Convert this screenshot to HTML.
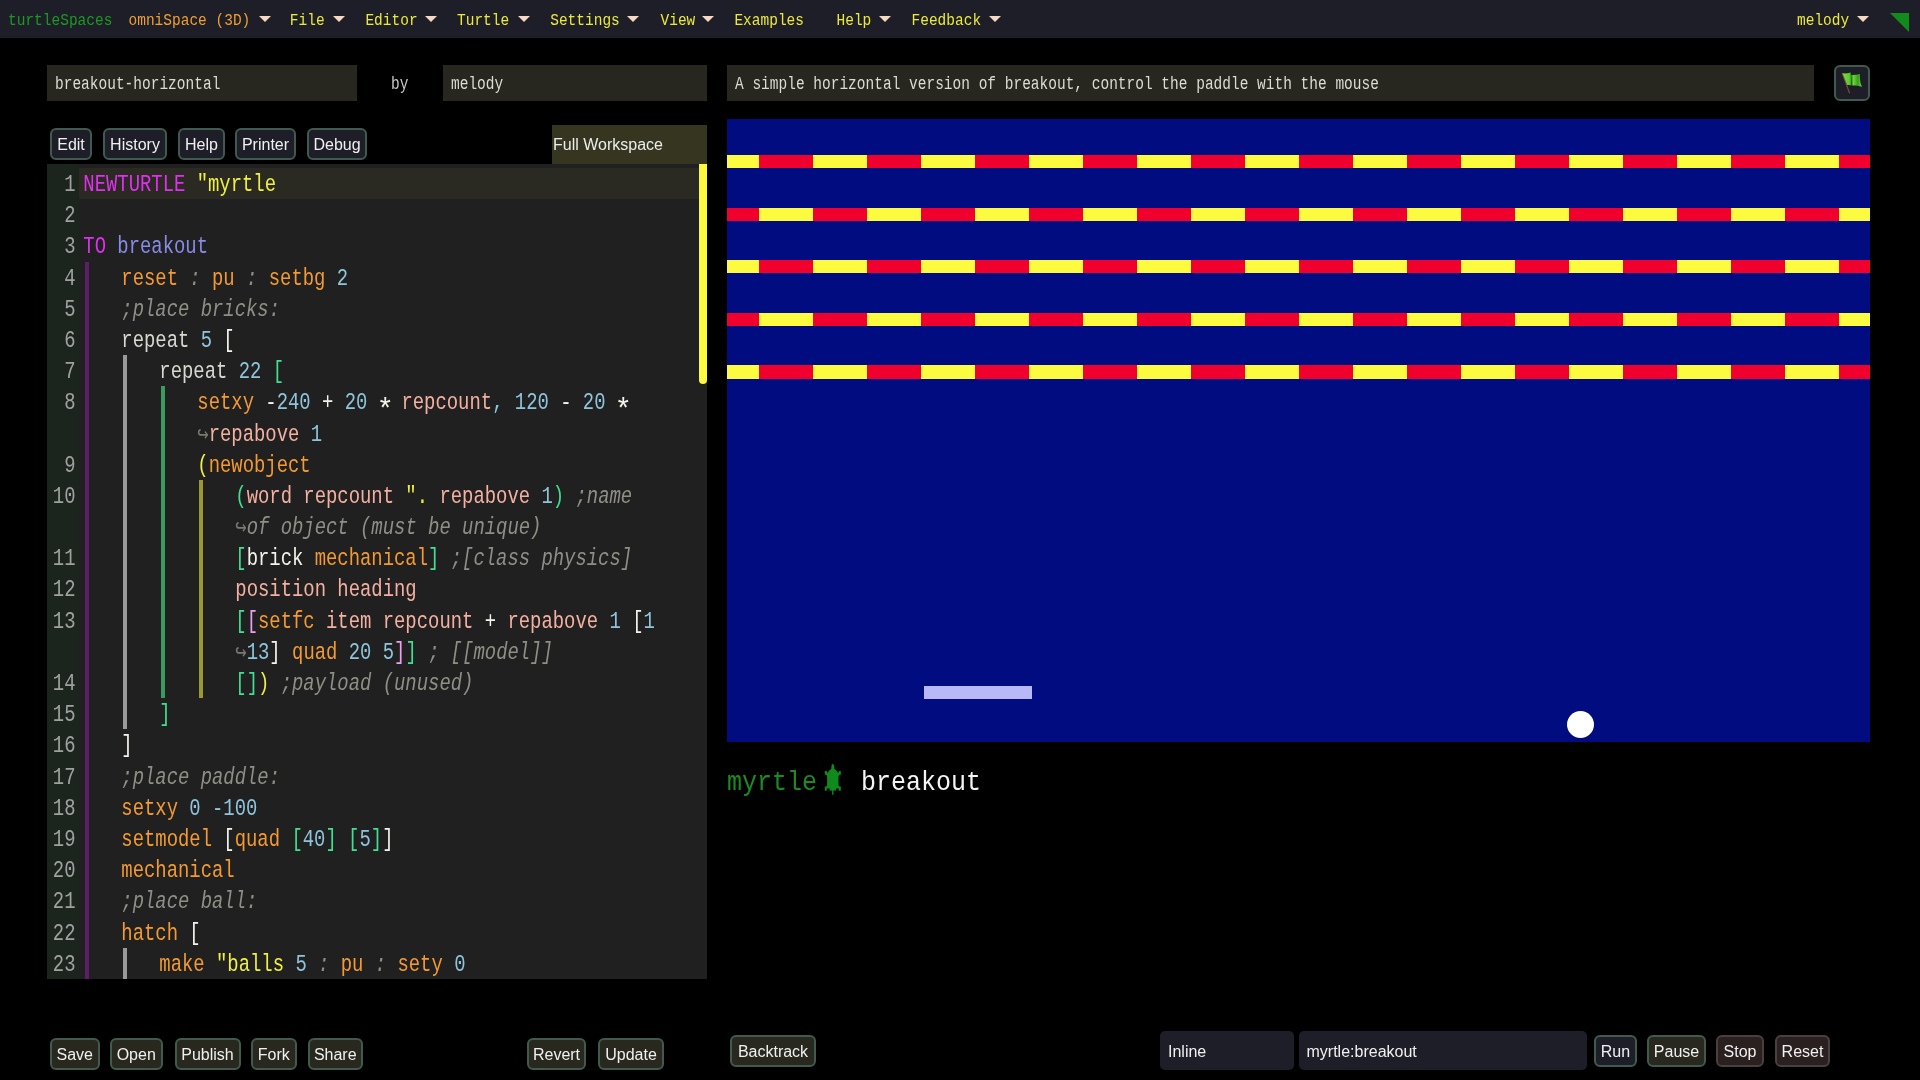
<!DOCTYPE html>
<html><head><meta charset="utf-8"><style>
html,body{margin:0;padding:0;background:#000;width:1920px;height:1080px;overflow:hidden;position:relative}
*{box-sizing:border-box}
.mono{font-family:"Liberation Mono",monospace}
.sans{font-family:"Liberation Sans",sans-serif}
#menubar{position:absolute;left:0;top:0;width:1920px;height:38px;background:#1e1e28}
.mi{position:absolute;top:1.5px;height:38px;line-height:38px;font-family:"Liberation Mono",monospace;font-size:14.5px;white-space:pre;transform:scaleY(1.19);transform-origin:0 25px}
.arr{position:absolute;top:16px;width:0;height:0;border-left:6px solid transparent;border-right:6px solid transparent;border-top:6.5px solid #f8d8c0}
.inp{position:absolute;background:#27261f;color:#dcdcd4;font-family:"Liberation Mono",monospace;font-size:14.5px;white-space:pre}
.inp span{position:absolute;left:8px;top:2.3px;line-height:36px;transform:scaleY(1.22);transform-origin:0 24px}
.btn{position:absolute;padding-top:2px;border:2px solid #405a50;border-radius:6px;color:#f0f0f0;font-family:"Liberation Sans",sans-serif;font-size:16px;text-align:center;display:flex;align-items:center;justify-content:center;white-space:pre}
#editor{position:absolute;left:47px;top:164px;width:660px;height:815px;background:#202020;overflow:hidden}
#gutter{position:absolute;left:47px;top:164px;width:32px;height:815px;background:#1c241e}
.ln{position:absolute;height:31.19px;line-height:31.19px;padding-top:3px;transform:scaleY(1.23);transform-origin:0 23px;font-family:"Liberation Mono",monospace;font-size:18.9px;white-space:pre;color:#e6e6dc}
.lnum{position:absolute;left:40px;width:35.5px;text-align:right;height:31.19px;line-height:31.19px;padding-top:3px;transform:scaleY(1.23);transform-origin:0 23px;font-family:"Liberation Mono",monospace;font-size:18.9px;color:#a0a0a0;white-space:pre}
#canvas{position:absolute;left:727px;top:119px;width:1143px;height:623px;background:#000c80;overflow:hidden}
</style></head><body><div id="root" style="position:absolute;left:0;top:0;width:1920px;height:1080px;background:#000;will-change:transform;overflow:hidden">
<div id="menubar"><div class="mi" style="left:8.0px;color:#1b9a22">turtleSpaces</div><div class="mi" style="left:128.5px;color:#f0a030">omniSpace (3D)</div><div class="arr" style="left:258.7px"></div><div class="mi" style="left:289.8px;color:#eaea38">File</div><div class="arr" style="left:333.0px"></div><div class="mi" style="left:365.4px;color:#eaea38">Editor</div><div class="arr" style="left:425.2px"></div><div class="mi" style="left:457.0px;color:#eaea38">Turtle</div><div class="arr" style="left:517.5px"></div><div class="mi" style="left:550.2px;color:#eaea38">Settings</div><div class="arr" style="left:627.3px"></div><div class="mi" style="left:660.5px;color:#eaea38">View</div><div class="arr" style="left:701.8px"></div><div class="mi" style="left:734.4px;color:#eaea38">Examples</div><div class="mi" style="left:836.5px;color:#eaea38">Help</div><div class="arr" style="left:879.2px"></div><div class="mi" style="left:911.5px;color:#eaea38">Feedback</div><div class="arr" style="left:988.9px"></div><div class="mi" style="left:1797.0px;color:#eaea38">melody</div><div class="arr" style="left:1857.2px"></div><svg style="position:absolute;left:1890px;top:12.5px" width="20" height="20" viewBox="0 0 20 20"><polygon points="0,0 19,0 19,19" fill="#138a1c"/></svg></div>
<div class="inp" style="left:47px;top:65px;width:310px;height:36px"><span>breakout-horizontal</span></div>
<div class="mono" style="position:absolute;left:391px;top:66.5px;height:36px;line-height:36px;font-size:14.5px;color:#c8c8c8;transform:scaleY(1.22);transform-origin:0 24px">by</div>
<div class="inp" style="left:443px;top:65px;width:264px;height:36px"><span>melody</span></div>
<div class="inp" style="left:727px;top:65px;width:1087px;height:36px"><span>A simple horizontal version of breakout, control the paddle with the mouse</span></div>
<div style="position:absolute;left:1834px;top:65px;width:36px;height:36px;background:#1e1e28;border:2px solid #405a50;border-radius:6px"></div>
<svg style="position:absolute;left:1834px;top:65px" width="36" height="36" viewBox="1834 65 36 36"><defs><linearGradient id="fg" x1="0" x2="1" y1="0" y2="0"><stop offset="0" stop-color="#78e040"/><stop offset="0.35" stop-color="#5cc830"/><stop offset="0.48" stop-color="#2e8a18"/><stop offset="0.55" stop-color="#6ad838"/><stop offset="0.8" stop-color="#3a9a20"/><stop offset="1" stop-color="#78e040"/></linearGradient></defs>
<line x1="1842.2" y1="73" x2="1849.6" y2="93.3" stroke="#7a5234" stroke-width="1.1"/>
<path d="M1842.6,73.3 C1845,73.6 1848,73.4 1850.6,72.4 L1851.6,85.4 C1850,85.2 1848.5,85.1 1847.2,85.1 Z M1850.9,74.9 C1854,75 1857,74.8 1859.8,74.1 C1859.8,78 1860,83 1861.9,86.8 C1858.5,85.8 1855,85.5 1852.2,85.6 Z" fill="url(#fg)"/></svg>
<div class="btn" style="left:50.0px;top:128.0px;width:42.0px;height:32.0px;background:#1e1e28;border-color:#405a50;font-size:16px">Edit</div><div class="btn" style="left:103.0px;top:128.0px;width:64.0px;height:32.0px;background:#1e1e28;border-color:#405a50;font-size:16px">History</div><div class="btn" style="left:178.0px;top:128.0px;width:47.0px;height:32.0px;background:#1e1e28;border-color:#405a50;font-size:16px">Help</div><div class="btn" style="left:235.0px;top:128.0px;width:61.0px;height:32.0px;background:#1e1e28;border-color:#405a50;font-size:16px">Printer</div><div class="btn" style="left:307.0px;top:128.0px;width:60.0px;height:32.0px;background:#1e1e28;border-color:#405a50;font-size:16px">Debug</div><div class="btn" style="left:50.0px;top:1038.0px;width:49.5px;height:31.5px;background:#28281f;border-color:#405a50;font-size:16px">Save</div><div class="btn" style="left:110.0px;top:1038.0px;width:52.5px;height:31.5px;background:#28281f;border-color:#405a50;font-size:16px">Open</div><div class="btn" style="left:174.5px;top:1038.0px;width:66.0px;height:31.5px;background:#28281f;border-color:#405a50;font-size:16px">Publish</div><div class="btn" style="left:251.0px;top:1038.0px;width:45.5px;height:31.5px;background:#28281f;border-color:#405a50;font-size:16px">Fork</div><div class="btn" style="left:308.0px;top:1038.0px;width:54.5px;height:31.5px;background:#28281f;border-color:#405a50;font-size:16px">Share</div><div class="btn" style="left:527.0px;top:1038.0px;width:59.0px;height:31.5px;background:#28281f;border-color:#405a50;font-size:16px">Revert</div><div class="btn" style="left:598.0px;top:1038.0px;width:66.0px;height:31.5px;background:#28281f;border-color:#405a50;font-size:16px">Update</div><div class="btn" style="left:730.0px;top:1035.0px;width:86.0px;height:32.0px;background:#28281f;border-color:#405a50;font-size:16px">Backtrack</div><div class="btn" style="left:1594.0px;top:1035.0px;width:43.0px;height:31.5px;background:#1e1e28;border-color:#405a50;font-size:16px">Run</div><div class="btn" style="left:1647.0px;top:1035.0px;width:59.0px;height:31.5px;background:#28281f;border-color:#405a50;font-size:16px">Pause</div><div class="btn" style="left:1716.0px;top:1035.0px;width:48.0px;height:31.5px;background:#2a2020;border-color:#4a4040;font-size:16px">Stop</div><div class="btn" style="left:1775.0px;top:1035.0px;width:55.0px;height:31.5px;background:#2a2020;border-color:#4a4040;font-size:16px">Reset</div>
<div style="position:absolute;left:552px;top:125px;width:155px;height:39px;background:#36351f"></div>
<div class="sans" style="position:absolute;left:553px;top:125px;height:39px;line-height:39px;font-size:16px;color:#ececec">Full Workspace</div>
<div id="editor"></div>
<div id="gutter"></div>
<div style="position:absolute;left:79px;top:168px;width:620px;height:31px;background:#2a2a22"></div>
<div style="position:absolute;left:699px;top:164px;width:8px;height:220px;background:#fdf93c;border-radius:0 0 4px 4px"></div>
<div style="position:absolute;left:85px;top:261.57px;width:4px;height:717.37px;background:#5c1e66"></div><div style="position:absolute;left:123px;top:355.14px;width:4px;height:374.28px;background:#9a9a9a"></div><div style="position:absolute;left:123px;top:947.75px;width:4px;height:31.19px;background:#9a9a9a"></div><div style="position:absolute;left:161px;top:386.33px;width:4px;height:311.90px;background:#3c9a60"></div><div style="position:absolute;left:199px;top:479.90px;width:4px;height:218.33px;background:#9a9a30"></div>
<div class="ln" style="top:168.00px;left:83.30px"><span style="color:#e030f0">NEWTURTLE</span><span style="color:#d8d8d0"> </span><span style="color:#f0f040">&quot;myrtle</span></div><div class="lnum" style="top:168.00px">1</div><div class="ln" style="top:199.19px;left:83.30px"></div><div class="lnum" style="top:199.19px">2</div><div class="ln" style="top:230.38px;left:83.30px"><span style="color:#e030f0">TO</span><span style="color:#d8d8d0"> </span><span style="color:#8a8ae8">breakout</span></div><div class="lnum" style="top:230.38px">3</div><div class="ln" style="top:261.57px;left:121.30px"><span style="color:#f39a32">reset</span><span style="color:#8f8f86;font-style:italic"> : </span><span style="color:#f39a32">pu</span><span style="color:#8f8f86;font-style:italic"> : </span><span style="color:#f39a32">setbg</span><span style="color:#d8d8d0"> </span><span style="color:#8ec4dc">2</span></div><div class="lnum" style="top:261.57px">4</div><div class="ln" style="top:292.76px;left:121.30px"><span style="color:#8f8f86;font-style:italic">;place bricks:</span></div><div class="lnum" style="top:292.76px">5</div><div class="ln" style="top:323.95px;left:121.30px"><span style="color:#d8d8d0">repeat </span><span style="color:#8ec4dc">5</span><span style="color:#d8d8d0"> </span><span style="color:#f4f4ec">[</span></div><div class="lnum" style="top:323.95px">6</div><div class="ln" style="top:355.14px;left:159.30px"><span style="color:#d8d8d0">repeat </span><span style="color:#8ec4dc">22</span><span style="color:#d8d8d0"> </span><span style="color:#40e090">[</span></div><div class="lnum" style="top:355.14px">7</div><div class="ln" style="top:386.33px;left:197.30px"><span style="color:#f39a32">setxy</span><span style="color:#d8d8d0"> </span><span style="color:#f4f4ec">-</span><span style="color:#8ec4dc">240</span><span style="color:#f4f4ec"> + </span><span style="color:#8ec4dc">20</span><span style="color:#f4f4ec"> </span><span style="color:#f4f4ec;display:inline-block;transform:translate(0.5px,6.5px) scale(1.5,1.3);transform-origin:50% 45%">*</span><span style="color:#f4f4ec"> </span><span style="color:#f4b0a0">repcount</span><span style="color:#8ec4dc">, </span><span style="color:#8ec4dc">120</span><span style="color:#f4f4ec"> - </span><span style="color:#8ec4dc">20</span><span style="color:#f4f4ec"> </span><span style="color:#f4f4ec;display:inline-block;transform:translate(0.5px,6.5px) scale(1.5,1.3);transform-origin:50% 45%">*</span></div><div class="lnum" style="top:386.33px">8</div><div class="ln" style="top:417.52px;left:197.30px"><span style="color:#7a7a72">↪</span><span style="color:#f4b0a0">repabove</span><span style="color:#d8d8d0"> </span><span style="color:#8ec4dc">1</span></div><div class="ln" style="top:448.71px;left:197.30px"><span style="color:#f0f040">(</span><span style="color:#f39a32">newobject</span></div><div class="lnum" style="top:448.71px">9</div><div class="ln" style="top:479.90px;left:235.30px"><span style="color:#40e090">(</span><span style="color:#f4b0a0">word repcount </span><span style="color:#f0f040">&quot;.</span><span style="color:#d8d8d0"> </span><span style="color:#f4b0a0">repabove</span><span style="color:#d8d8d0"> </span><span style="color:#8ec4dc">1</span><span style="color:#40e090">)</span><span style="color:#d8d8d0"> </span><span style="color:#8f8f86;font-style:italic">;name</span></div><div class="lnum" style="top:479.90px">10</div><div class="ln" style="top:511.09px;left:235.30px"><span style="color:#7a7a72">↪</span><span style="color:#8f8f86;font-style:italic">of object (must be unique)</span></div><div class="ln" style="top:542.28px;left:235.30px"><span style="color:#40e090">[</span><span style="color:#f4f4ec">brick</span><span style="color:#d8d8d0"> </span><span style="color:#f39a32">mechanical</span><span style="color:#40e090">]</span><span style="color:#d8d8d0"> </span><span style="color:#8f8f86;font-style:italic">;[class physics]</span></div><div class="lnum" style="top:542.28px">11</div><div class="ln" style="top:573.47px;left:235.30px"><span style="color:#f4b0a0">position heading</span></div><div class="lnum" style="top:573.47px">12</div><div class="ln" style="top:604.66px;left:235.30px"><span style="color:#40e090">[</span><span style="color:#e8a0f0">[</span><span style="color:#f39a32">setfc</span><span style="color:#d8d8d0"> </span><span style="color:#f4b0a0">item repcount</span><span style="color:#f4f4ec"> + </span><span style="color:#f4b0a0">repabove</span><span style="color:#d8d8d0"> </span><span style="color:#8ec4dc">1</span><span style="color:#d8d8d0"> </span><span style="color:#f4f4ec">[</span><span style="color:#8ec4dc">1</span></div><div class="lnum" style="top:604.66px">13</div><div class="ln" style="top:635.85px;left:235.30px"><span style="color:#7a7a72">↪</span><span style="color:#8ec4dc">13</span><span style="color:#f4f4ec">]</span><span style="color:#d8d8d0"> </span><span style="color:#f39a32">quad</span><span style="color:#d8d8d0"> </span><span style="color:#8ec4dc">20 5</span><span style="color:#e8a0f0">]</span><span style="color:#40e090">]</span><span style="color:#d8d8d0"> </span><span style="color:#8f8f86;font-style:italic">; [[model]]</span></div><div class="ln" style="top:667.04px;left:235.30px"><span style="color:#40e090">[]</span><span style="color:#f0f040">)</span><span style="color:#d8d8d0"> </span><span style="color:#8f8f86;font-style:italic">;payload (unused)</span></div><div class="lnum" style="top:667.04px">14</div><div class="ln" style="top:698.23px;left:159.30px"><span style="color:#40e090">]</span></div><div class="lnum" style="top:698.23px">15</div><div class="ln" style="top:729.42px;left:121.30px"><span style="color:#f4f4ec">]</span></div><div class="lnum" style="top:729.42px">16</div><div class="ln" style="top:760.61px;left:121.30px"><span style="color:#8f8f86;font-style:italic">;place paddle:</span></div><div class="lnum" style="top:760.61px">17</div><div class="ln" style="top:791.80px;left:121.30px"><span style="color:#f39a32">setxy</span><span style="color:#d8d8d0"> </span><span style="color:#8ec4dc">0 -100</span></div><div class="lnum" style="top:791.80px">18</div><div class="ln" style="top:822.99px;left:121.30px"><span style="color:#f39a32">setmodel</span><span style="color:#d8d8d0"> </span><span style="color:#f4f4ec">[</span><span style="color:#f39a32">quad</span><span style="color:#d8d8d0"> </span><span style="color:#40e090">[</span><span style="color:#8ec4dc">40</span><span style="color:#40e090">]</span><span style="color:#d8d8d0"> </span><span style="color:#40e090">[</span><span style="color:#8ec4dc">5</span><span style="color:#40e090">]</span><span style="color:#f4f4ec">]</span></div><div class="lnum" style="top:822.99px">19</div><div class="ln" style="top:854.18px;left:121.30px"><span style="color:#f39a32">mechanical</span></div><div class="lnum" style="top:854.18px">20</div><div class="ln" style="top:885.37px;left:121.30px"><span style="color:#8f8f86;font-style:italic">;place ball:</span></div><div class="lnum" style="top:885.37px">21</div><div class="ln" style="top:916.56px;left:121.30px"><span style="color:#f39a32">hatch</span><span style="color:#d8d8d0"> </span><span style="color:#f4f4ec">[</span></div><div class="lnum" style="top:916.56px">22</div><div class="ln" style="top:947.75px;left:159.30px"><span style="color:#f39a32">make</span><span style="color:#d8d8d0"> </span><span style="color:#f0f040">&quot;balls</span><span style="color:#d8d8d0"> </span><span style="color:#8ec4dc">5</span><span style="color:#8f8f86;font-style:italic"> : </span><span style="color:#f39a32">pu</span><span style="color:#8f8f86;font-style:italic"> : </span><span style="color:#f39a32">sety</span><span style="color:#d8d8d0"> </span><span style="color:#8ec4dc">0</span></div><div class="lnum" style="top:947.75px">23</div>
<div id="canvas"><div style="position:absolute;left:0.00px;top:36.10px;width:31.70px;height:13.3px;background:#fdfb40"></div><div style="position:absolute;left:31.70px;top:36.10px;width:54.00px;height:13.3px;background:#f0002c"></div><div style="position:absolute;left:85.70px;top:36.10px;width:54.00px;height:13.3px;background:#fdfb40"></div><div style="position:absolute;left:139.70px;top:36.10px;width:54.00px;height:13.3px;background:#f0002c"></div><div style="position:absolute;left:193.70px;top:36.10px;width:54.00px;height:13.3px;background:#fdfb40"></div><div style="position:absolute;left:247.70px;top:36.10px;width:54.00px;height:13.3px;background:#f0002c"></div><div style="position:absolute;left:301.70px;top:36.10px;width:54.00px;height:13.3px;background:#fdfb40"></div><div style="position:absolute;left:355.70px;top:36.10px;width:54.00px;height:13.3px;background:#f0002c"></div><div style="position:absolute;left:409.70px;top:36.10px;width:54.00px;height:13.3px;background:#fdfb40"></div><div style="position:absolute;left:463.70px;top:36.10px;width:54.00px;height:13.3px;background:#f0002c"></div><div style="position:absolute;left:517.70px;top:36.10px;width:54.00px;height:13.3px;background:#fdfb40"></div><div style="position:absolute;left:571.70px;top:36.10px;width:54.00px;height:13.3px;background:#f0002c"></div><div style="position:absolute;left:625.70px;top:36.10px;width:54.00px;height:13.3px;background:#fdfb40"></div><div style="position:absolute;left:679.70px;top:36.10px;width:54.00px;height:13.3px;background:#f0002c"></div><div style="position:absolute;left:733.70px;top:36.10px;width:54.00px;height:13.3px;background:#fdfb40"></div><div style="position:absolute;left:787.70px;top:36.10px;width:54.00px;height:13.3px;background:#f0002c"></div><div style="position:absolute;left:841.70px;top:36.10px;width:54.00px;height:13.3px;background:#fdfb40"></div><div style="position:absolute;left:895.70px;top:36.10px;width:54.00px;height:13.3px;background:#f0002c"></div><div style="position:absolute;left:949.70px;top:36.10px;width:54.00px;height:13.3px;background:#fdfb40"></div><div style="position:absolute;left:1003.70px;top:36.10px;width:54.00px;height:13.3px;background:#f0002c"></div><div style="position:absolute;left:1057.70px;top:36.10px;width:54.00px;height:13.3px;background:#fdfb40"></div><div style="position:absolute;left:1111.70px;top:36.10px;width:31.30px;height:13.3px;background:#f0002c"></div><div style="position:absolute;left:0.00px;top:88.70px;width:31.70px;height:13.3px;background:#f0002c"></div><div style="position:absolute;left:31.70px;top:88.70px;width:54.00px;height:13.3px;background:#fdfb40"></div><div style="position:absolute;left:85.70px;top:88.70px;width:54.00px;height:13.3px;background:#f0002c"></div><div style="position:absolute;left:139.70px;top:88.70px;width:54.00px;height:13.3px;background:#fdfb40"></div><div style="position:absolute;left:193.70px;top:88.70px;width:54.00px;height:13.3px;background:#f0002c"></div><div style="position:absolute;left:247.70px;top:88.70px;width:54.00px;height:13.3px;background:#fdfb40"></div><div style="position:absolute;left:301.70px;top:88.70px;width:54.00px;height:13.3px;background:#f0002c"></div><div style="position:absolute;left:355.70px;top:88.70px;width:54.00px;height:13.3px;background:#fdfb40"></div><div style="position:absolute;left:409.70px;top:88.70px;width:54.00px;height:13.3px;background:#f0002c"></div><div style="position:absolute;left:463.70px;top:88.70px;width:54.00px;height:13.3px;background:#fdfb40"></div><div style="position:absolute;left:517.70px;top:88.70px;width:54.00px;height:13.3px;background:#f0002c"></div><div style="position:absolute;left:571.70px;top:88.70px;width:54.00px;height:13.3px;background:#fdfb40"></div><div style="position:absolute;left:625.70px;top:88.70px;width:54.00px;height:13.3px;background:#f0002c"></div><div style="position:absolute;left:679.70px;top:88.70px;width:54.00px;height:13.3px;background:#fdfb40"></div><div style="position:absolute;left:733.70px;top:88.70px;width:54.00px;height:13.3px;background:#f0002c"></div><div style="position:absolute;left:787.70px;top:88.70px;width:54.00px;height:13.3px;background:#fdfb40"></div><div style="position:absolute;left:841.70px;top:88.70px;width:54.00px;height:13.3px;background:#f0002c"></div><div style="position:absolute;left:895.70px;top:88.70px;width:54.00px;height:13.3px;background:#fdfb40"></div><div style="position:absolute;left:949.70px;top:88.70px;width:54.00px;height:13.3px;background:#f0002c"></div><div style="position:absolute;left:1003.70px;top:88.70px;width:54.00px;height:13.3px;background:#fdfb40"></div><div style="position:absolute;left:1057.70px;top:88.70px;width:54.00px;height:13.3px;background:#f0002c"></div><div style="position:absolute;left:1111.70px;top:88.70px;width:31.30px;height:13.3px;background:#fdfb40"></div><div style="position:absolute;left:0.00px;top:141.20px;width:31.70px;height:13.3px;background:#fdfb40"></div><div style="position:absolute;left:31.70px;top:141.20px;width:54.00px;height:13.3px;background:#f0002c"></div><div style="position:absolute;left:85.70px;top:141.20px;width:54.00px;height:13.3px;background:#fdfb40"></div><div style="position:absolute;left:139.70px;top:141.20px;width:54.00px;height:13.3px;background:#f0002c"></div><div style="position:absolute;left:193.70px;top:141.20px;width:54.00px;height:13.3px;background:#fdfb40"></div><div style="position:absolute;left:247.70px;top:141.20px;width:54.00px;height:13.3px;background:#f0002c"></div><div style="position:absolute;left:301.70px;top:141.20px;width:54.00px;height:13.3px;background:#fdfb40"></div><div style="position:absolute;left:355.70px;top:141.20px;width:54.00px;height:13.3px;background:#f0002c"></div><div style="position:absolute;left:409.70px;top:141.20px;width:54.00px;height:13.3px;background:#fdfb40"></div><div style="position:absolute;left:463.70px;top:141.20px;width:54.00px;height:13.3px;background:#f0002c"></div><div style="position:absolute;left:517.70px;top:141.20px;width:54.00px;height:13.3px;background:#fdfb40"></div><div style="position:absolute;left:571.70px;top:141.20px;width:54.00px;height:13.3px;background:#f0002c"></div><div style="position:absolute;left:625.70px;top:141.20px;width:54.00px;height:13.3px;background:#fdfb40"></div><div style="position:absolute;left:679.70px;top:141.20px;width:54.00px;height:13.3px;background:#f0002c"></div><div style="position:absolute;left:733.70px;top:141.20px;width:54.00px;height:13.3px;background:#fdfb40"></div><div style="position:absolute;left:787.70px;top:141.20px;width:54.00px;height:13.3px;background:#f0002c"></div><div style="position:absolute;left:841.70px;top:141.20px;width:54.00px;height:13.3px;background:#fdfb40"></div><div style="position:absolute;left:895.70px;top:141.20px;width:54.00px;height:13.3px;background:#f0002c"></div><div style="position:absolute;left:949.70px;top:141.20px;width:54.00px;height:13.3px;background:#fdfb40"></div><div style="position:absolute;left:1003.70px;top:141.20px;width:54.00px;height:13.3px;background:#f0002c"></div><div style="position:absolute;left:1057.70px;top:141.20px;width:54.00px;height:13.3px;background:#fdfb40"></div><div style="position:absolute;left:1111.70px;top:141.20px;width:31.30px;height:13.3px;background:#f0002c"></div><div style="position:absolute;left:0.00px;top:193.80px;width:31.70px;height:13.3px;background:#f0002c"></div><div style="position:absolute;left:31.70px;top:193.80px;width:54.00px;height:13.3px;background:#fdfb40"></div><div style="position:absolute;left:85.70px;top:193.80px;width:54.00px;height:13.3px;background:#f0002c"></div><div style="position:absolute;left:139.70px;top:193.80px;width:54.00px;height:13.3px;background:#fdfb40"></div><div style="position:absolute;left:193.70px;top:193.80px;width:54.00px;height:13.3px;background:#f0002c"></div><div style="position:absolute;left:247.70px;top:193.80px;width:54.00px;height:13.3px;background:#fdfb40"></div><div style="position:absolute;left:301.70px;top:193.80px;width:54.00px;height:13.3px;background:#f0002c"></div><div style="position:absolute;left:355.70px;top:193.80px;width:54.00px;height:13.3px;background:#fdfb40"></div><div style="position:absolute;left:409.70px;top:193.80px;width:54.00px;height:13.3px;background:#f0002c"></div><div style="position:absolute;left:463.70px;top:193.80px;width:54.00px;height:13.3px;background:#fdfb40"></div><div style="position:absolute;left:517.70px;top:193.80px;width:54.00px;height:13.3px;background:#f0002c"></div><div style="position:absolute;left:571.70px;top:193.80px;width:54.00px;height:13.3px;background:#fdfb40"></div><div style="position:absolute;left:625.70px;top:193.80px;width:54.00px;height:13.3px;background:#f0002c"></div><div style="position:absolute;left:679.70px;top:193.80px;width:54.00px;height:13.3px;background:#fdfb40"></div><div style="position:absolute;left:733.70px;top:193.80px;width:54.00px;height:13.3px;background:#f0002c"></div><div style="position:absolute;left:787.70px;top:193.80px;width:54.00px;height:13.3px;background:#fdfb40"></div><div style="position:absolute;left:841.70px;top:193.80px;width:54.00px;height:13.3px;background:#f0002c"></div><div style="position:absolute;left:895.70px;top:193.80px;width:54.00px;height:13.3px;background:#fdfb40"></div><div style="position:absolute;left:949.70px;top:193.80px;width:54.00px;height:13.3px;background:#f0002c"></div><div style="position:absolute;left:1003.70px;top:193.80px;width:54.00px;height:13.3px;background:#fdfb40"></div><div style="position:absolute;left:1057.70px;top:193.80px;width:54.00px;height:13.3px;background:#f0002c"></div><div style="position:absolute;left:1111.70px;top:193.80px;width:31.30px;height:13.3px;background:#fdfb40"></div><div style="position:absolute;left:0.00px;top:246.30px;width:31.70px;height:13.3px;background:#fdfb40"></div><div style="position:absolute;left:31.70px;top:246.30px;width:54.00px;height:13.3px;background:#f0002c"></div><div style="position:absolute;left:85.70px;top:246.30px;width:54.00px;height:13.3px;background:#fdfb40"></div><div style="position:absolute;left:139.70px;top:246.30px;width:54.00px;height:13.3px;background:#f0002c"></div><div style="position:absolute;left:193.70px;top:246.30px;width:54.00px;height:13.3px;background:#fdfb40"></div><div style="position:absolute;left:247.70px;top:246.30px;width:54.00px;height:13.3px;background:#f0002c"></div><div style="position:absolute;left:301.70px;top:246.30px;width:54.00px;height:13.3px;background:#fdfb40"></div><div style="position:absolute;left:355.70px;top:246.30px;width:54.00px;height:13.3px;background:#f0002c"></div><div style="position:absolute;left:409.70px;top:246.30px;width:54.00px;height:13.3px;background:#fdfb40"></div><div style="position:absolute;left:463.70px;top:246.30px;width:54.00px;height:13.3px;background:#f0002c"></div><div style="position:absolute;left:517.70px;top:246.30px;width:54.00px;height:13.3px;background:#fdfb40"></div><div style="position:absolute;left:571.70px;top:246.30px;width:54.00px;height:13.3px;background:#f0002c"></div><div style="position:absolute;left:625.70px;top:246.30px;width:54.00px;height:13.3px;background:#fdfb40"></div><div style="position:absolute;left:679.70px;top:246.30px;width:54.00px;height:13.3px;background:#f0002c"></div><div style="position:absolute;left:733.70px;top:246.30px;width:54.00px;height:13.3px;background:#fdfb40"></div><div style="position:absolute;left:787.70px;top:246.30px;width:54.00px;height:13.3px;background:#f0002c"></div><div style="position:absolute;left:841.70px;top:246.30px;width:54.00px;height:13.3px;background:#fdfb40"></div><div style="position:absolute;left:895.70px;top:246.30px;width:54.00px;height:13.3px;background:#f0002c"></div><div style="position:absolute;left:949.70px;top:246.30px;width:54.00px;height:13.3px;background:#fdfb40"></div><div style="position:absolute;left:1003.70px;top:246.30px;width:54.00px;height:13.3px;background:#f0002c"></div><div style="position:absolute;left:1057.70px;top:246.30px;width:54.00px;height:13.3px;background:#fdfb40"></div><div style="position:absolute;left:1111.70px;top:246.30px;width:31.30px;height:13.3px;background:#f0002c"></div>
<div style="position:absolute;left:197.2px;top:567.0px;width:108px;height:13px;background:#b8b8f8"></div>
<div style="position:absolute;left:840.2px;top:591.8px;width:27px;height:27px;border-radius:50%;background:#fff"></div>
</div>
<div class="mono" style="position:absolute;left:727px;top:763.9px;font-size:25px;line-height:40px;color:#1b8c22;white-space:pre;transform:scaleY(1.12);transform-origin:0 26.7px">myrtle</div>
<svg style="position:absolute;left:815px;top:758px" width="40" height="40" viewBox="0 0 40 40"><path d="M17.8,5.4 L16.4,7.8 L16.3,10.8 L14.0,12.8 L13.0,14.4 L11.9,14.4 L11.9,12.9 L9.8,12.9 L9.8,16.8 L11.2,16.8 L12.1,18.2 L12.1,27.2 L11.2,28.6 L9.8,28.6 L9.8,32.8 L11.8,32.8 L11.8,30.6 L14.6,30.6 L14.6,32.6 L17.1,32.6 L17.1,36.7 L18.5,36.7 L18.5,32.6 L21.0,32.6 L21.0,30.6 L23.8,30.6 L23.8,32.8 L25.8,32.8 L25.8,28.6 L24.4,28.6 L23.5,27.2 L23.5,18.2 L24.4,16.8 L25.8,16.8 L25.8,12.9 L23.7,12.9 L23.7,14.4 L22.6,14.4 L21.6,12.8 L19.3,10.8 L19.2,7.8 L17.8,5.4 Z" fill="#108a1c"/></svg>
<div class="mono" style="position:absolute;left:861px;top:763.9px;font-size:25px;line-height:40px;color:#f4f4f4;white-space:pre;transform:scaleY(1.12);transform-origin:0 26.7px">breakout</div>
<div class="sans" style="position:absolute;left:1160px;top:1031px;width:134px;height:39px;background:#1e1e28;border-radius:5px;color:#f0f0f0;font-size:16px;line-height:39px;padding-top:0.5px;padding-left:8px">Inline</div>
<div class="sans" style="position:absolute;left:1299px;top:1031px;width:288px;height:39px;background:#1e1e28;border-radius:5px;color:#f0f0f0;font-size:16px;line-height:39px;padding-top:0.5px;padding-left:7.5px">myrtle:breakout</div>
</div></body></html>
